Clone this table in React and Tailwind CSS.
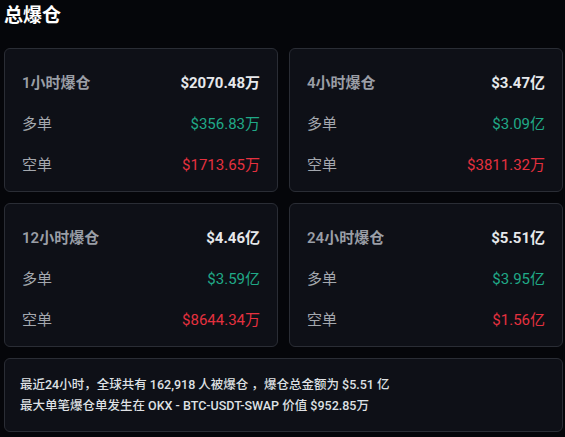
import React from "react";

const cards = [
  { title: "1小时爆仓", total: "$2070.48万", long: "$356.83万", short: "$1713.65万" },
  { title: "4小时爆仓", total: "$3.47亿", long: "$3.09亿", short: "$3811.32万" },
  { title: "12小时爆仓", total: "$4.46亿", long: "$3.59亿", short: "$8644.34万" },
  { title: "24小时爆仓", total: "$5.51亿", long: "$3.95亿", short: "$1.56亿" },
];

const font = { fontFamily: 'Roboto, "Noto Sans CJK SC", sans-serif' };

function Card({ title, total, long, short }) {
  return (
    <div className="h-[144px] rounded-[6px] border border-[#2a2d35] bg-[#0e1017] px-[17px] pt-[14px] pb-[5px] flex flex-col">
      <div className="h-[41px] flex items-center justify-between text-[15px]">
        <span className="font-semibold text-[#9a9ea6]">{title}</span>
        <span className="font-bold text-[#e6e8eb]">{total}</span>
      </div>
      <div className="h-[41px] flex items-center justify-between text-[15px]">
        <span className="text-[#a4a8ae]">多单</span>
        <span className="text-[#20a987]">{long}</span>
      </div>
      <div className="h-[41px] flex items-center justify-between text-[15px]">
        <span className="text-[#a4a8ae]">空单</span>
        <span className="text-[#e5313f]">{short}</span>
      </div>
    </div>
  );
}

export default function App() {
  return (
    <div className="w-[565px] h-[437px] bg-[#05060a] pl-[4px] pr-[2px] overflow-hidden" style={font}>
      <h1 className="h-[30px] leading-[32px] text-[19px] font-bold text-white">总爆仓</h1>

      <div className="mt-[18px] grid grid-cols-2 gap-[11px]">
        {cards.map((c) => (
          <Card key={c.title} {...c} />
        ))}
      </div>

      <div className="mt-[11px] h-[74px] rounded-[6px] border border-[#2a2d35] bg-[#0e1017] px-[15px] pt-[15px] text-[12.5px] leading-[21px] font-medium text-[#dfe1e4]">
        <p>最近24小时，全球共有 162,918 人被爆仓 ，爆仓总金额为 $5.51 亿</p>
        <p>最大单笔爆仓单发生在 OKX - BTC-USDT-SWAP 价值 $952.85万</p>
      </div>
    </div>
  );
}
